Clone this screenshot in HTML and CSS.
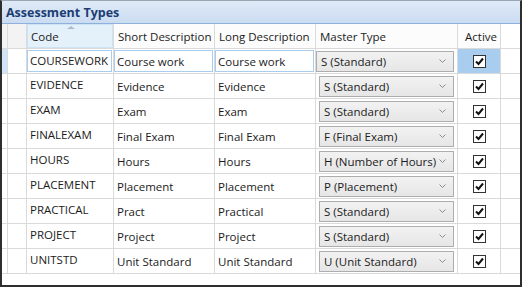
FILE: index.html
```html
<!DOCTYPE html>
<html lang="en">
<head>
  <meta charset="UTF-8" />
  <title>Assessment Types</title>
  <link rel="stylesheet" href="styles.css">
</head>
<body>
  <div class="panel">
    <div class="panel-title">Assessment Types</div>

    <div class="grid">
      <div class="row head">
        <div class="cell ind"></div>
        <div class="cell sel"></div>
        <div class="cell sorted"><span class="sort-arrow"></span>Code</div>
        <div class="cell">Short Description</div>
        <div class="cell">Long Description</div>
        <div class="cell">Master Type</div>
        <div class="cell center">Active</div>
        <div class="cell fill"></div>
      </div>

      <div class="row current">
        <div class="cell ind"></div>
        <div class="cell sel"></div>
        <div class="cell code"><span class="edit">COURSEWORK</span></div>
        <div class="cell"><span class="edit">Course work</span></div>
        <div class="cell"><span class="edit">Course work</span></div>
        <div class="cell"><div class="combo">S (Standard)<svg class="chev" width="7" height="4" viewBox="0 0 7 4"><polyline points="0.5,0.5 3.5,3.5 6.5,0.5" /></svg></div></div>
        <div class="cell active"><span class="check"><svg width="11" height="11" viewBox="0 0 11 11"><polyline points="2,5.5 4.5,8 9,2.5" /></svg></span></div>
        <div class="cell fill"></div>
      </div>

      <div class="row">
        <div class="cell ind"></div>
        <div class="cell sel"></div>
        <div class="cell code">EVIDENCE</div>
        <div class="cell">Evidence</div>
        <div class="cell">Evidence</div>
        <div class="cell"><div class="combo">S (Standard)<svg class="chev" width="7" height="4" viewBox="0 0 7 4"><polyline points="0.5,0.5 3.5,3.5 6.5,0.5" /></svg></div></div>
        <div class="cell active"><span class="check"><svg width="11" height="11" viewBox="0 0 11 11"><polyline points="2,5.5 4.5,8 9,2.5" /></svg></span></div>
        <div class="cell fill"></div>
      </div>

      <div class="row">
        <div class="cell ind"></div>
        <div class="cell sel"></div>
        <div class="cell code">EXAM</div>
        <div class="cell">Exam</div>
        <div class="cell">Exam</div>
        <div class="cell"><div class="combo">S (Standard)<svg class="chev" width="7" height="4" viewBox="0 0 7 4"><polyline points="0.5,0.5 3.5,3.5 6.5,0.5" /></svg></div></div>
        <div class="cell active"><span class="check"><svg width="11" height="11" viewBox="0 0 11 11"><polyline points="2,5.5 4.5,8 9,2.5" /></svg></span></div>
        <div class="cell fill"></div>
      </div>

      <div class="row">
        <div class="cell ind"></div>
        <div class="cell sel"></div>
        <div class="cell code">FINALEXAM</div>
        <div class="cell">Final Exam</div>
        <div class="cell">Final Exam</div>
        <div class="cell"><div class="combo">F (Final Exam)<svg class="chev" width="7" height="4" viewBox="0 0 7 4"><polyline points="0.5,0.5 3.5,3.5 6.5,0.5" /></svg></div></div>
        <div class="cell active"><span class="check"><svg width="11" height="11" viewBox="0 0 11 11"><polyline points="2,5.5 4.5,8 9,2.5" /></svg></span></div>
        <div class="cell fill"></div>
      </div>

      <div class="row">
        <div class="cell ind"></div>
        <div class="cell sel"></div>
        <div class="cell code">HOURS</div>
        <div class="cell">Hours</div>
        <div class="cell">Hours</div>
        <div class="cell"><div class="combo">H (Number of Hours)<svg class="chev" width="7" height="4" viewBox="0 0 7 4"><polyline points="0.5,0.5 3.5,3.5 6.5,0.5" /></svg></div></div>
        <div class="cell active"><span class="check"><svg width="11" height="11" viewBox="0 0 11 11"><polyline points="2,5.5 4.5,8 9,2.5" /></svg></span></div>
        <div class="cell fill"></div>
      </div>

      <div class="row">
        <div class="cell ind"></div>
        <div class="cell sel"></div>
        <div class="cell code">PLACEMENT</div>
        <div class="cell">Placement</div>
        <div class="cell">Placement</div>
        <div class="cell"><div class="combo">P (Placement)<svg class="chev" width="7" height="4" viewBox="0 0 7 4"><polyline points="0.5,0.5 3.5,3.5 6.5,0.5" /></svg></div></div>
        <div class="cell active"><span class="check"><svg width="11" height="11" viewBox="0 0 11 11"><polyline points="2,5.5 4.5,8 9,2.5" /></svg></span></div>
        <div class="cell fill"></div>
      </div>

      <div class="row">
        <div class="cell ind"></div>
        <div class="cell sel"></div>
        <div class="cell code">PRACTICAL</div>
        <div class="cell">Pract</div>
        <div class="cell">Practical</div>
        <div class="cell"><div class="combo">S (Standard)<svg class="chev" width="7" height="4" viewBox="0 0 7 4"><polyline points="0.5,0.5 3.5,3.5 6.5,0.5" /></svg></div></div>
        <div class="cell active"><span class="check"><svg width="11" height="11" viewBox="0 0 11 11"><polyline points="2,5.5 4.5,8 9,2.5" /></svg></span></div>
        <div class="cell fill"></div>
      </div>

      <div class="row">
        <div class="cell ind"></div>
        <div class="cell sel"></div>
        <div class="cell code">PROJECT</div>
        <div class="cell">Project</div>
        <div class="cell">Project</div>
        <div class="cell"><div class="combo">S (Standard)<svg class="chev" width="7" height="4" viewBox="0 0 7 4"><polyline points="0.5,0.5 3.5,3.5 6.5,0.5" /></svg></div></div>
        <div class="cell active"><span class="check"><svg width="11" height="11" viewBox="0 0 11 11"><polyline points="2,5.5 4.5,8 9,2.5" /></svg></span></div>
        <div class="cell fill"></div>
      </div>

      <div class="row">
        <div class="cell ind"></div>
        <div class="cell sel"></div>
        <div class="cell code">UNITSTD</div>
        <div class="cell">Unit Standard</div>
        <div class="cell">Unit Standard</div>
        <div class="cell"><div class="combo">U (Unit Standard)<svg class="chev" width="7" height="4" viewBox="0 0 7 4"><polyline points="0.5,0.5 3.5,3.5 6.5,0.5" /></svg></div></div>
        <div class="cell active"><span class="check"><svg width="11" height="11" viewBox="0 0 11 11"><polyline points="2,5.5 4.5,8 9,2.5" /></svg></span></div>
        <div class="cell fill"></div>
      </div>
    </div>
  </div>
</body>
</html>
```

FILE: styles.css
```css
:root {
  --line: #dadada;
  --text: #1b1b1b;
  --title: #1c3d73;
  --focus: #a8cdee;
}

html, body {
  margin: 0;
  height: 100%;
  background: #fff;
}

.panel {
  box-sizing: border-box;
  width: 522px;
  height: 287px;
  border: 2px solid #2e2e2e;
  border-top: 1px solid #9aa6b4;
  font-family: "Open Sans", sans-serif;
  font-size: 11.5px;
  color: var(--text);
  overflow: hidden;
}

.panel-title {
  height: 22px;
  padding-left: 4px;
  display: flex;
  align-items: center;
  font-weight: bold;
  font-size: 12.5px;
  color: var(--title);
  background: linear-gradient(#dfeaf7, #cbdcf1);
  border-bottom: 1px solid #8db0dc;
}

.row {
  display: grid;
  grid-template-columns: 6px 19px 87px 101px 101px 142px 43px 1fr;
  height: 25px;
  border-bottom: 1px solid var(--line);
  box-sizing: border-box;
}

.cell {
  border-right: 1px solid var(--line);
  display: flex;
  align-items: center;
  padding-left: 3px;
  white-space: nowrap;
  overflow: hidden;
  position: relative;
}

.cell.ind, .cell.sel, .cell.fill {
  padding: 0;
}

.cell.center {
  justify-content: center;
  padding: 0;
}

.head .cell {
  background: #fcfcfc;
  padding-left: 4px;
}

.head .cell.ind, .head .cell.sel {
  background: #f3f3f3;
}

.head .cell.sorted {
  background: #e4f1fa;
  box-shadow: inset 0 0 0 1px #cbe4f5;
}

.head .cell.fill {
  background: #fff;
  border-right: none;
}

.sort-arrow {
  position: absolute;
  top: 2px;
  left: 40px;
  width: 0;
  height: 0;
  border-left: 4px solid transparent;
  border-right: 4px solid transparent;
  border-bottom: 3px solid #a9bccf;
}

.cell.code {
  align-items: flex-start;
  padding-top: 3px;
  padding-left: 3px;
}

.current .cell.ind {
  background: #cfe4f6;
}

.current .cell.code {
  padding: 0;
  align-items: stretch;
}

.edit {
  flex: 1;
  display: flex;
  align-items: center;
  margin: 1px 1px 1px 0;
  padding-left: 2px;
  border: 1px solid var(--focus);
  background: #fff;
}

.current .cell.code .edit {
  align-items: flex-start;
  padding-top: 2px;
}

.current .cell {
  padding-left: 0;
  align-items: stretch;
}

.combo {
  box-sizing: border-box;
  flex: 1;
  height: 21px;
  margin: 0 3px 0 0;
  padding: 0 0 0 4px;
  display: flex;
  align-items: center;
  border: 1px solid #adadad;
  background: linear-gradient(#f2f2f2, #e6e6e6);
  align-self: center;
}

.chev {
  margin-left: auto;
  margin-right: 7px;
  fill: none;
  stroke: #8a8a8a;
  stroke-width: 1;
}

.cell.active {
  justify-content: center;
  padding: 0;
  align-items: center;
}

.current .cell.active {
  background: var(--focus);
  align-items: center;
}

.check {
  box-sizing: border-box;
  width: 13px;
  height: 13px;
  border: 1px solid #333;
  background: #fff;
  display: flex;
  align-items: center;
  justify-content: center;
}

.check polyline {
  fill: none;
  stroke: #111;
  stroke-width: 2;
}

.cell.fill {
  border-right: none;
}
```
